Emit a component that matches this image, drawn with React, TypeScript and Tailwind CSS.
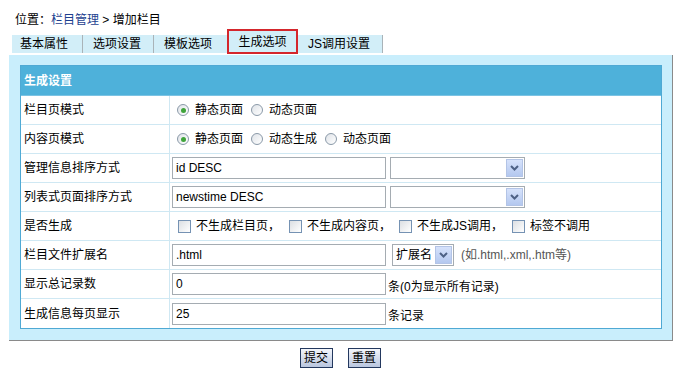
import React from "react";

const Radio = ({ checked }: { checked?: boolean }) => (
  <span className="inline-flex h-[12px] w-[12px] items-center justify-center rounded-full border border-[#8a99a8] bg-gradient-to-br from-[#dfe3e8] to-white">
    {checked && <span className="h-[5px] w-[5px] rounded-full bg-[#3fa43a]" />}
  </span>
);

const Check = () => (
  <span className="inline-block h-[13px] w-[13px] border border-[#7592b3] bg-gradient-to-br from-[#dcdfe3] to-white" />
);

const Arrow = () => (
  <span className="flex h-[18px] w-[17px] items-center justify-center border border-[#b3c4e6] bg-gradient-to-b from-[#d6e2fb] to-[#b4c8ef]">
    <svg width="9" height="6" viewBox="0 0 9 6">
      <path d="M1 1 L4.5 4.5 L8 1" fill="none" stroke="#4d6185" strokeWidth="2" />
    </svg>
  </span>
);

const Input = ({ value }: { value: string }) => (
  <div className="flex h-[22px] w-[214px] items-center border border-[#a5acb2] bg-white pl-[3px]">{value}</div>
);

const Select = ({ w, text }: { w: string; text?: string }) => (
  <div className={`flex h-[22px] items-center justify-between border border-[#a5acb2] bg-white pl-[3px] pr-[1px] ${w}`}>
    <span>{text}</span>
    <Arrow />
  </div>
);

const Row = ({ label, children, last }: { label: string; children: React.ReactNode; last?: boolean }) => (
  <div className={`flex h-[29px] ${last ? "" : "border-b border-[#cfe8f3]"}`}>
    <div className="flex w-[149px] items-center border-r border-[#cfe8f3] pl-[3px]">{label}</div>
    <div className="flex flex-1 items-center pl-[2px]">{children}</div>
  </div>
);

export default function App() {
  return (
    <div className="h-[387px] w-[680px] bg-white text-[12px] leading-[16px] text-black font-['Liberation_Sans','Noto_Sans_CJK_SC',sans-serif]">
      <div className="h-[29px] pl-[15px] pt-[12px]">
        位置：<span className="text-[#1d3f8f]">栏目管理</span> &gt; 增加栏目
      </div>
      <div className="ml-[12px] flex h-[26px] items-start">
        <div className="mt-[6px] flex h-[18px] w-[71px] items-center border-r border-[#a9b3b8] bg-[#d2eef8] pl-[8px]">基本属性</div>
        <div className="mt-[6px] flex h-[18px] w-[71px] items-center border-r border-[#a9b3b8] bg-[#d2eef8] pl-[10px]">选项设置</div>
        <div className="mt-[6px] flex h-[18px] w-[73px] items-center bg-[#d2eef8] pl-[10px]">模板选项</div>
        <div className="flex h-[25px] w-[71px] items-start justify-center border-2 border-[#d4262c] bg-[#d2eef8] pt-[3px]">生成选项</div>
        <div className="mt-[6px] flex h-[18px] w-[85px] items-center border-r border-[#a9b3b8] bg-[#d2eef8] pl-[10px]">JS调用设置</div>
      </div>
      <div className="ml-[9px] h-[286px] w-[664px] border-r border-b border-[#8a8a8a] bg-[#c9eefc] pl-[11px] pr-[9px] pt-[10px]">
        <div className="w-[642px] border border-[#4fa9d4] bg-white">
          <div className="flex h-[30px] items-center border-b border-[#7cc3e3] bg-[#4eb1da] pl-[3px] font-bold text-white">生成设置</div>
          <Row label="栏目页模式">
            <span className="ml-[5px] flex items-center gap-[6px]"><Radio checked />静态页面</span>
            <span className="ml-[8px] flex items-center gap-[6px]"><Radio />动态页面</span>
          </Row>
          <Row label="内容页模式">
            <span className="ml-[5px] flex items-center gap-[6px]"><Radio checked />静态页面</span>
            <span className="ml-[8px] flex items-center gap-[6px]"><Radio />动态生成</span>
            <span className="ml-[8px] flex items-center gap-[6px]"><Radio />动态页面</span>
          </Row>
          <Row label="管理信息排序方式">
            <Input value="id DESC" />
            <div className="ml-[4px]"><Select w="w-[135px]" /></div>
          </Row>
          <Row label="列表式页面排序方式">
            <Input value="newstime DESC" />
            <div className="ml-[4px]"><Select w="w-[135px]" /></div>
          </Row>
          <Row label="是否生成">
            <span className="ml-[6px] flex items-center gap-[5px]"><Check />不生成栏目页，</span>
            <span className="ml-[9px] flex items-center gap-[5px]"><Check />不生成内容页，</span>
            <span className="ml-[8px] flex items-center gap-[5px]"><Check />不生成JS调用，</span>
            <span className="ml-[9px] flex items-center gap-[5px]"><Check />标签不调用</span>
          </Row>
          <Row label="栏目文件扩展名">
            <Input value=".html" />
            <div className="ml-[6px]"><Select w="w-[62px]" text="扩展名" /></div>
            <span className="ml-[7px] text-[#555]">(如.html,.xml,.htm等)</span>
          </Row>
          <Row label="显示总记录数">
            <Input value="0" />
            <span className="ml-[2px] pt-[5px]">条(0为显示所有记录)</span>
          </Row>
          <Row label="生成信息每页显示" last>
            <Input value="25" />
            <span className="ml-[2px] pt-[5px]">条记录</span>
          </Row>
        </div>
      </div>
      <div className="mt-[7px] flex justify-center gap-[15px]">
        <button className="flex h-[20px] w-[33px] items-center justify-center border border-[#23385e] bg-gradient-to-b from-[#f4f6fb] to-[#b9c6df] text-[12px]">提交</button>
        <button className="flex h-[20px] w-[33px] items-center justify-center border border-[#23385e] bg-gradient-to-b from-[#f4f6fb] to-[#b9c6df] text-[12px]">重置</button>
      </div>
    </div>
  );
}
